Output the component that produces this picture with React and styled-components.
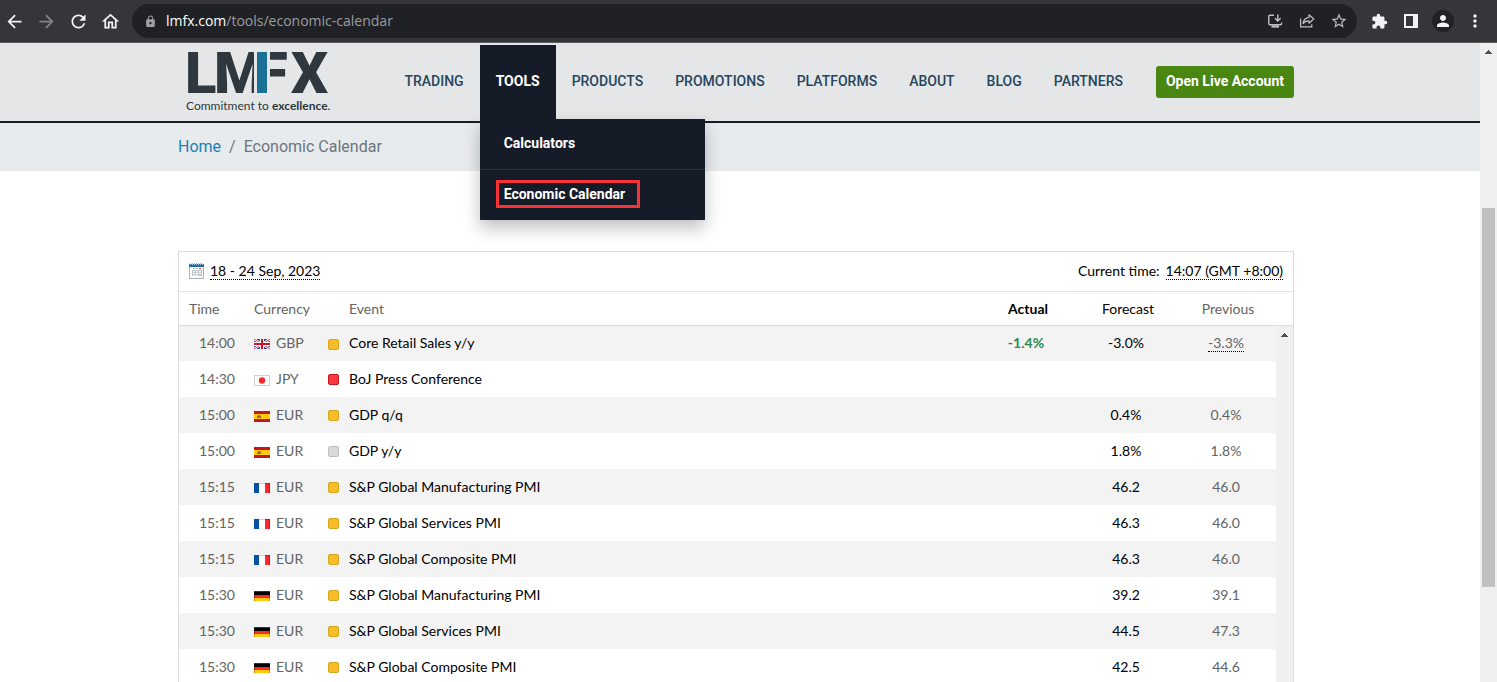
import React from 'react';
import styled, { createGlobalStyle, ThemeProvider } from 'styled-components';
import {
  MdArrowBack,
  MdArrowForward,
  MdRefresh,
  MdOutlineHome,
  MdLock,
  MdStarOutline,
  MdExtension,
  MdPerson,
  MdMoreVert,
} from 'react-icons/md';

const theme = {
  colors: {
    chrome: '#35363a',
    omnibox: '#202124',
    header: '#e5e6e7',
    navy: '#161c27',
    nav: '#264660',
    link: '#1a80b6',
    muted: '#6c757d',
    green: '#4a8612',
    line: '#dadcde',
    stripe: '#f3f3f3',
    track: '#f0f0f0',
    thumb: '#c1c1c1',
    grey: '#646464',
  },
  fonts: {
    site: 'Roboto, sans-serif',
    table: '"Trebuchet MS", Lato, sans-serif',
  },
};

const GlobalStyle = createGlobalStyle`
  * {
    box-sizing: border-box;
  }
  body {
    margin: 0;
    background: #fff;
    font-family: Roboto, sans-serif;
  }
  button {
    font: inherit;
    border: 0;
    padding: 0;
    background: none;
    cursor: pointer;
  }
`;

const Window = styled.div`
  display: flex;
  flex-direction: column;
  height: 100vh;
  overflow: hidden;
`;

/* ---------- browser toolbar ---------- */

const Toolbar = styled.div`
  flex: none;
  display: flex;
  align-items: center;
  gap: 8px;
  height: 43px;
  padding-right: 8px;
  background: ${(props) => props.theme.colors.chrome};
  border-bottom: 1px solid #5b5c60;
`;

const IconGroup = styled.div`
  display: flex;
  gap: 4px;
`;

const IconButton = styled.button`
  display: flex;
  align-items: center;
  justify-content: center;
  width: 28px;
  height: 28px;
  color: ${(props) => (props.$dim ? '#80868b' : props.$soft ? '#bdc1c6' : '#f1f3f4')};
`;

const Avatar = styled.span`
  display: flex;
  align-items: center;
  justify-content: center;
  width: 22px;
  height: 22px;
  border-radius: 50%;
  background: ${(props) => props.theme.colors.omnibox};
`;

const Omnibox = styled.div`
  flex: 1;
  display: flex;
  align-items: center;
  height: 34px;
  padding: 0 4px 0 12px;
  border-radius: 17px;
  background: ${(props) => props.theme.colors.omnibox};
  color: #9aa0a6;
`;

const Url = styled.span`
  flex: 1;
  margin-left: 9px;
  font: 14px/20px "Open Sans", sans-serif;
  color: #9a9da1;

  b {
    font-weight: 400;
    color: #fff;
  }
`;

/* ---------- page ---------- */

const Viewport = styled.div`
  flex: 1;
  min-height: 0;
  display: flex;
`;

const Page = styled.div`
  flex: 1;
  min-width: 0;
  overflow: hidden;
`;

const Container = styled.div`
  max-width: 1124px;
  margin: 0 auto;
  padding-right: 8px;
  ${(props) => props.$bar && 'display: flex; align-items: flex-start; justify-content: space-between;'}
`;

const Header = styled.header`
  height: 80px;
  background: ${(props) => props.theme.colors.header};
  border-bottom: 2px solid ${(props) => props.theme.colors.navy};
`;

const Logo = styled.a`
  display: block;
  padding: 8px 0 0 8px;
  color: #2f383e;
  text-decoration: none;
`;

const Tagline = styled.span`
  display: block;
  font: 12px/18px Lato, sans-serif;
`;

const Nav = styled.nav`
  display: flex;
  padding-top: 2px;
`;

const NavItem = styled.div`
  position: relative;
`;

const NavLink = styled.a`
  display: block;
  height: 74px;
  padding: 0 16px;
  font-size: 14px;
  font-weight: ${(props) => (props.$active ? 700 : 500)};
  line-height: 72px;
  text-decoration: none;
  color: ${(props) => (props.$active ? '#fff' : props.theme.colors.nav)};
  background: ${(props) => (props.$active ? props.theme.colors.navy : 'transparent')};
`;

const Menu = styled.div`
  position: absolute;
  z-index: 2;
  top: 74px;
  left: 0;
  width: 225px;
  background: ${(props) => props.theme.colors.navy};
  box-shadow: 0 8px 16px rgba(0, 0, 0, 0.25);
`;

const MenuLink = styled.a`
  display: flex;
  align-items: center;
  height: 50px;
  padding: 0 16px 2px;
  font-size: 14px;
  font-weight: 700;
  line-height: 22px;
  color: #fff;
  text-decoration: none;

  & + & {
    height: 51px;
    border-top: 1px solid #22344b;
  }

  span {
    padding: 0 12px 0 5px;
    border: 3px solid ${(props) => (props.$marked ? '#f93335' : 'transparent')};
  }
`;

const AccountButton = styled.button`
  height: 32px;
  margin: 21px 0 0 17px;
  padding: 0 10px 2px;
  border-radius: 3px;
  background: ${(props) => props.theme.colors.green};
  color: #fff;
  font-size: 14px;
  font-weight: 700;
`;

const Breadcrumb = styled.nav`
  background: #e8ebee;
  font-size: 16px;
  line-height: 48px;
  color: ${(props) => props.theme.colors.muted};

  a {
    color: ${(props) => props.theme.colors.link};
    text-decoration: none;
  }

  i {
    padding: 0 8px;
    font-style: normal;
  }
`;

/* ---------- calendar ---------- */

const Calendar = styled.section`
  margin-top: 80px;
  border: 1px solid ${(props) => props.theme.colors.line};
  font-family: ${(props) => props.theme.fonts.table};
  font-size: 14px;
  line-height: 18px;
  color: #000;
`;

const CalendarBar = styled.div`
  display: flex;
  align-items: center;
  height: 40px;
  padding: 0 10px 2px;
  border-bottom: 1px solid #e4e5e6;
`;

const BarLabel = styled.span`
  height: 18px;
  line-height: 17px;
  margin-left: auto;
`;

const DottedButton = styled.button`
  height: 18px;
  margin-left: 6px;
  line-height: 17px;
  border-bottom: 1px dotted #000;
`;

const Dotted = styled.span`
  display: inline-block;
  line-height: 17px;
  border-bottom: 1px dotted #000;
`;

const TableArea = styled.div`
  display: flex;
`;

const Table = styled.table`
  flex: 1;
  table-layout: fixed;
  border-collapse: separate;
  border-spacing: 0;

  tbody tr:first-child td {
    border-top: 1px solid ${(props) => props.theme.colors.line};
  }
`;

const Col = styled.col`
  width: ${(props) => props.$width};
`;

const Th = styled.th`
  height: 33px;
  padding: 0 0 0 ${(props) => props.$indent || '4px'};
  font-weight: ${(props) => (props.$bold ? 700 : 400)};
  text-align: ${(props) => (props.$indent ? 'left' : 'center')};
  color: ${(props) => (props.$dark ? '#000' : props.theme.colors.grey)};
`;

const Row = styled.tr`
  background: ${(props) => (props.$striped ? props.theme.colors.stripe : '#fff')};
`;

const Td = styled.td`
  height: 36px;
  padding: 0 0 1px ${(props) => props.$indent || '0'};
  text-align: ${(props) => (props.$indent ? 'left' : 'center')};
  font-weight: ${(props) => (props.$good ? 700 : 400)};
  color: ${(props) => (props.$good ? '#2e8b4f' : props.$grey ? props.theme.colors.grey : '#000')};
`;

const Inline = styled.div`
  display: flex;
  align-items: center;
  gap: ${(props) => props.$gap};
  white-space: nowrap;
`;

const impactColors = {
  medium: ['#f5bd27', '#dba51b'],
  high: ['#fb3640', '#c4141f'],
  low: ['#d9d9d9', '#bfbfbf'],
};

const Impact = styled.span`
  width: 11px;
  height: 11px;
  margin-top: 2px;
  border-radius: 2px;
  background: ${(props) => impactColors[props.$level][0]};
  border: 1px solid ${(props) => impactColors[props.$level][1]};
`;

const ScrollColumn = styled.div`
  flex: none;
  display: flex;
  flex-direction: column;
  width: 17px;
`;

const ScrollCap = styled.div`
  height: 34px;
  border-bottom: 1px solid ${(props) => props.theme.colors.line};
`;

const ScrollTrack = styled.div`
  flex: 1;
  display: flex;
  flex-direction: column;
  align-items: center;
  padding-top: 7px;
  background: ${(props) => props.theme.colors.track};
  color: #505050;
`;

const PageScroll = styled(ScrollTrack)`
  flex: none;
  width: 17px;
`;

/* the page is scrolled about a quarter of the way down */
const Thumb = styled.div`
  width: 13px;
  height: 60%;
  margin-top: 154px;
  background: ${(props) => props.theme.colors.thumb};
`;

/* ---------- drawings ---------- */

const ScrollArrow = () => (
  <svg width="7" height="4" viewBox="0 0 7 4" fill="currentColor" shapeRendering="crispEdges">
    <path d="M3 0h1v1h1v1h1v1h1v1H0V3h1V2h1V1h1z" />
  </svg>
);

const InstallIcon = () => (
  <svg width="16" height="16" viewBox="0 0 16 16" fill="none" stroke="currentColor" strokeWidth="1.4">
    <path d="M7 2.2H3a1.2 1.2 0 0 0-1.200 1.200v7.200a1.200 1.200 0 0 0 1.200 1.200h10.400a1.200 1.200 0 0 0 1.200-1.200V9.500" />
    <path d="M10.800 1.500v6M8 5.200l2.800 2.800 2.800-2.800" />
    <path d="M4.500 13.500h7.500" strokeWidth="2.200" />
  </svg>
);

const ShareIcon = () => (
  <svg width="16" height="16" viewBox="0 0 16 16" fill="none" stroke="currentColor" strokeWidth="1.200">
    <path d="M1.600 5.500v8.300h11.200v-2.600" />
    <path d="M10 1.800l4.800 4.200L10 10.200V7.800c-2.800 0-4.600.8-6 2.800.5-3.600 2.600-5.800 6-6.200z" strokeLinejoin="round" />
  </svg>
);

const SidePanelIcon = () => (
  <svg width="14" height="14" viewBox="0 0 14 14">
    <path d="M0 0h14v14H0zM2 2v10h7V2z" fill="currentColor" fillRule="evenodd" />
  </svg>
);

const CalendarIcon = () => (
  <svg width="15" height="16" viewBox="0 0 15 16" shapeRendering="crispEdges">
    <path d="M0 1h15v15H0z" fill="#a9b4bd" />
    <path d="M1 4h13v11H1z" fill="#fafbfc" />
    <path d="M0 1h15v3H0z" fill="#1c6ea4" />
    <path d="M1 0h1v2H1zM3 0h1v2H3zM5 0h1v2H5zM7 0h1v2H7zM9 0h1v2H9zM11 0h1v2h-1zM13 0h1v2h-1z" fill="#9fc8e2" />
    <path d="M4 5h2v1H4zM7 5h2v1H7z" fill="#b9c1c8" />
    <path d="M10 5h2v1h-2z" fill="#e8383d" />
    <path d="M3 7h10v6H3z" fill="#c3c9ce" />
    <path d="M4 8h2v1H4zM7 8h2v1H7zM10 8h2v1h-2zM4 10h2v1H4zM7 10h2v1H7zM10 10h2v1h-2zM4 12h2v1H4zM7 12h2v1H7z" fill="#fff" />
  </svg>
);

const flags = {
  gb: (
    <>
      <path d="M0 0h16v10H0z" fill="#0b4da0" />
      <path d="M0 0l16 10M16 0L0 10" stroke="#fff" strokeWidth="2.400" />
      <path d="M0 0l16 10M16 0L0 10" stroke="#d80f22" strokeWidth=".8" />
      <path d="M6 0h4v10H6zM0 3h16v4H0z" fill="#fff" />
      <path d="M7 0h2v10H7zM0 4h16v2H0z" fill="#d80f22" />
    </>
  ),
  jp: (
    <>
      <path d="M0 0h16v11H0z" fill="#ccd1d4" />
      <path d="M1 1h14v9H1z" fill="#fff" />
      <circle cx="8" cy="5.500" r="3.200" fill="#fb2b30" />
    </>
  ),
  es: (
    <>
      <path d="M0 0h16v11H0z" fill="#c8141d" />
      <path d="M0 3h16v5H0z" fill="#ffc90c" />
      <path d="M4 4h2v1h1v2H3V5h1z" fill="#a8601c" />
    </>
  ),
  fr: (
    <>
      <path d="M0 0h5v10H0z" fill="#0751a5" />
      <path d="M5 0h6v10H5z" fill="#fff" />
      <path d="M5 0h6v1H5z" fill="#ccd1d4" />
      <path d="M11 0h5v10h-5z" fill="#fb2b30" />
      <path d="M11 0h5v1h-5zM15 0h1v10h-1z" fill="#c8141d" />
    </>
  ),
  de: (
    <>
      <path d="M0 0h16v4H0z" fill="#000" />
      <path d="M0 0h16v1H0z" fill="#333" />
      <path d="M0 4h16v3H0z" fill="#fb2b30" />
      <path d="M0 7h16v3H0z" fill="#ffc90c" />
      <path d="M0 4h1v3H0zM15 4h1v3h-1z" fill="#c8141d" />
      <path d="M0 7h1v3H0zM15 7h1v3h-1z" fill="#d19a10" />
    </>
  ),
};

const FlagSvg = styled.svg`
  width: 16px;
  height: 11px;
  margin-top: 3px;
`;

const Flag = ({ code }) => <FlagSvg viewBox="0 0 16 11">{flags[code]}</FlagSvg>;

const Mark = styled.svg`
  display: block;
  overflow: visible;
  font: 900 58px Roboto, sans-serif;
  fill: #2f383e;
`;

// M and F share the blue stem, a thin gap sits on both sides of it
const LogoMark = () => (
  <Mark width="144" height="46" viewBox="0 0 144 46">
    <text x="-1 28 70 105" y="42">LMFX</text>
    <path d="M68 0h16v43H68z" fill="#e5e6e7" />
    <path d="M71 1h10v41H71z" fill="#1a7096" />
  </Mark>
);

/* ---------- content ---------- */

const menu = ['Calculators', 'Economic Calendar'];
const navLinks = ['TRADING', 'TOOLS', 'PRODUCTS', 'PROMOTIONS', 'PLATFORMS', 'ABOUT', 'BLOG', 'PARTNERS'];

const events = [
  { time: '14:00', flag: 'gb', currency: 'GBP', level: 'medium', name: 'Core Retail Sales y/y', actual: '-1.4%', forecast: '-3.0%', previous: '-3.3%', revised: true },
  { time: '14:30', flag: 'jp', currency: 'JPY', level: 'high', name: 'BoJ Press Conference' },
  { time: '15:00', flag: 'es', currency: 'EUR', level: 'medium', name: 'GDP q/q', forecast: '0.4%', previous: '0.4%' },
  { time: '15:00', flag: 'es', currency: 'EUR', level: 'low', name: 'GDP y/y', forecast: '1.8%', previous: '1.8%' },
  { time: '15:15', flag: 'fr', currency: 'EUR', level: 'medium', name: 'S&P Global Manufacturing PMI', forecast: '46.2', previous: '46.0' },
  { time: '15:15', flag: 'fr', currency: 'EUR', level: 'medium', name: 'S&P Global Services PMI', forecast: '46.3', previous: '46.0' },
  { time: '15:15', flag: 'fr', currency: 'EUR', level: 'medium', name: 'S&P Global Composite PMI', forecast: '46.3', previous: '46.0' },
  { time: '15:30', flag: 'de', currency: 'EUR', level: 'medium', name: 'S&P Global Manufacturing PMI', forecast: '39.2', previous: '39.1' },
  { time: '15:30', flag: 'de', currency: 'EUR', level: 'medium', name: 'S&P Global Services PMI', forecast: '44.5', previous: '47.3' },
  { time: '15:30', flag: 'de', currency: 'EUR', level: 'medium', name: 'S&P Global Composite PMI', forecast: '42.5', previous: '44.6' },
];

const BrowserBar = () => (
  <Toolbar>
    <IconGroup>
      <IconButton aria-label="Back"><MdArrowBack size={21} /></IconButton>
      <IconButton aria-label="Forward" $dim><MdArrowForward size={21} /></IconButton>
      <IconButton aria-label="Reload"><MdRefresh size={21} /></IconButton>
      <IconButton aria-label="Home"><MdOutlineHome size={21} /></IconButton>
    </IconGroup>
    <Omnibox>
      <MdLock size={13} />
      <Url><b>lmfx.com</b>/tools/economic-calendar</Url>
      <IconGroup>
        <IconButton aria-label="Install" $soft><InstallIcon /></IconButton>
        <IconButton aria-label="Share" $soft><ShareIcon /></IconButton>
        <IconButton aria-label="Bookmark" $soft><MdStarOutline size={18} /></IconButton>
      </IconGroup>
    </Omnibox>
    <IconGroup>
      <IconButton aria-label="Extensions"><MdExtension size={17} /></IconButton>
      <IconButton aria-label="Side panel"><SidePanelIcon /></IconButton>
      <IconButton aria-label="Profile"><Avatar><MdPerson size={18} /></Avatar></IconButton>
      <IconButton aria-label="More"><MdMoreVert size={20} /></IconButton>
    </IconGroup>
  </Toolbar>
);

const SiteHeader = () => (
  <Header>
    <Container $bar>
      <Logo href="#" aria-label="LMFX">
        <LogoMark />
        <Tagline>Commitment to <b>excellence</b>.</Tagline>
      </Logo>
      <Nav>
        {navLinks.map((label) => (
          <NavItem key={label}>
            <NavLink href="#" $active={label === 'TOOLS'}>{label}</NavLink>
            {label === 'TOOLS' && (
              <Menu>
                {menu.map((item) => (
                  <MenuLink key={item} href="#" $marked={item === 'Economic Calendar'}><span>{item}</span></MenuLink>
                ))}
              </Menu>
            )}
          </NavItem>
        ))}
        <AccountButton>Open Live Account</AccountButton>
      </Nav>
    </Container>
  </Header>
);

const EventRow = ({ event, striped }) => (
  <Row $striped={striped}>
    <Td $indent="20px" $grey>{event.time}</Td>
    <Td $indent="10px" $grey>
      <Inline $gap="6px"><Flag code={event.flag} />{event.currency}</Inline>
    </Td>
    <Td $indent="10px">
      <Inline $gap="10px"><Impact $level={event.level} />{event.name}</Inline>
    </Td>
    <Td $good>{event.actual}</Td>
    <Td>{event.forecast}</Td>
    <Td $grey>{event.revised ? <Dotted>{event.previous}</Dotted> : event.previous}</Td>
  </Row>
);

const EconomicCalendar = () => (
  <Calendar>
    <CalendarBar>
      <CalendarIcon />
      <DottedButton>18 - 24 Sep, 2023</DottedButton>
      <BarLabel>Current time:</BarLabel>
      <DottedButton>14:07 (GMT +8:00)</DottedButton>
    </CalendarBar>
    <TableArea>
      <Table>
        <colgroup>
          <Col $width="65px" />
          <Col $width="74px" />
          <Col $width="auto" />
          <Col $width="100px" />
          <Col $width="100px" />
          <Col $width="100px" />
        </colgroup>
        <thead>
          <tr>
            <Th $indent="10px">Time</Th>
            <Th $indent="10px">Currency</Th>
            <Th $indent="31px">Event</Th>
            <Th $bold $dark>Actual</Th>
            <Th $dark>Forecast</Th>
            <Th>Previous</Th>
          </tr>
        </thead>
        <tbody>
          {events.map((event, index) => (
            <EventRow key={event.time + event.name} event={event} striped={index % 2 === 0} />
          ))}
        </tbody>
      </Table>
      <ScrollColumn>
        <ScrollCap />
        <ScrollTrack><ScrollArrow /></ScrollTrack>
      </ScrollColumn>
    </TableArea>
  </Calendar>
);

const App = () => (
  <ThemeProvider theme={theme}>
    <GlobalStyle />
    <Window>
      <BrowserBar />
      <Viewport>
        <Page>
          <SiteHeader />
          <Breadcrumb>
            <Container><a href="#">Home</a><i>/</i>Economic Calendar</Container>
          </Breadcrumb>
          <Container>
            <EconomicCalendar />
          </Container>
        </Page>
        <PageScroll>
          <ScrollArrow />
          <Thumb />
        </PageScroll>
      </Viewport>
    </Window>
  </ThemeProvider>
);

export default App;
